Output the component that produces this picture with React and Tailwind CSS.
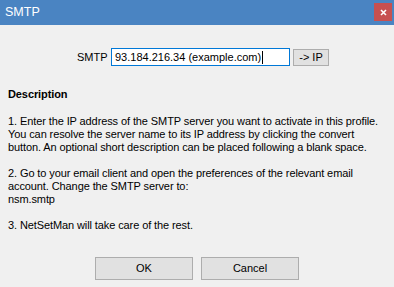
import React from 'react';

const font = { fontFamily: '"Liberation Sans", Arial, sans-serif' };

const App = () => {
    return (
        <div className="w-[394px] h-[287px] bg-[#f0f0f0] flex flex-col overflow-hidden text-black" style={font}>
            {/* Title bar */}
            <div className="h-[25px] bg-[#4a84c2] flex items-start justify-between shrink-0">
                <span className="pl-[5px] pt-[5px] text-[12.5px] leading-[14px] text-white">SMTP</span>
                <button className="mt-[3px] mr-[2px] w-[18px] h-[18px] bg-[#c75050] flex items-center justify-center">
                    <svg width="7" height="7" viewBox="0 0 7 7">
                        <path d="M1 1 L6 6 M6 1 L1 6" stroke="#fff" strokeWidth="1.6" />
                    </svg>
                </button>
            </div>

            {/* SMTP row */}
            <div className="flex items-center pl-[77px] mt-[23px] h-[18px]">
                <span className="text-[11px] leading-[13px] w-[34px]">SMTP</span>
                <div className="w-[179px] h-[18px] border border-[#0078d7] bg-white flex items-center px-[3px]">
                    <span className="text-[11px] leading-[13px] whitespace-nowrap">93.184.216.34 (example.com)</span>
                    <span className="w-px h-[13px] bg-black ml-px"></span>
                </div>
                <button className="ml-[3px] w-[36px] h-[17px] border border-[#adadad] bg-[#e1e1e1] text-[11px] leading-[13px] flex items-center justify-center">
                    -&gt; IP
                </button>
            </div>

            {/* Description */}
            <div className="px-[8px] mt-[22px] text-[11px] leading-[13px] whitespace-nowrap tracking-[-0.1px]">
                <div className="font-bold">Description</div>
                <p className="mt-[14px]">
                    1. Enter the IP address of the SMTP server you want to activate in this profile.
                    <br />
                    You can resolve the server name to its IP address by clicking the convert
                    <br />
                    button. An optional short description can be placed following a blank space.
                </p>
                <p className="mt-[13px]">
                    2. Go to your email client and open the preferences of the relevant email
                    <br />
                    account. Change the SMTP server to:
                    <br />
                    nsm.smtp
                </p>
                <p className="mt-[13px]">3. NetSetMan will take care of the rest.</p>
            </div>

            {/* Buttons */}
            <div className="flex gap-[8px] pl-[95px] mt-[25px]">
                <button className="w-[98px] h-[23px] border border-[#adadad] bg-[#e1e1e1] text-[11px]">OK</button>
                <button className="w-[98px] h-[23px] border border-[#adadad] bg-[#e1e1e1] text-[11px]">Cancel</button>
            </div>
        </div>
    );
};

export default App;
